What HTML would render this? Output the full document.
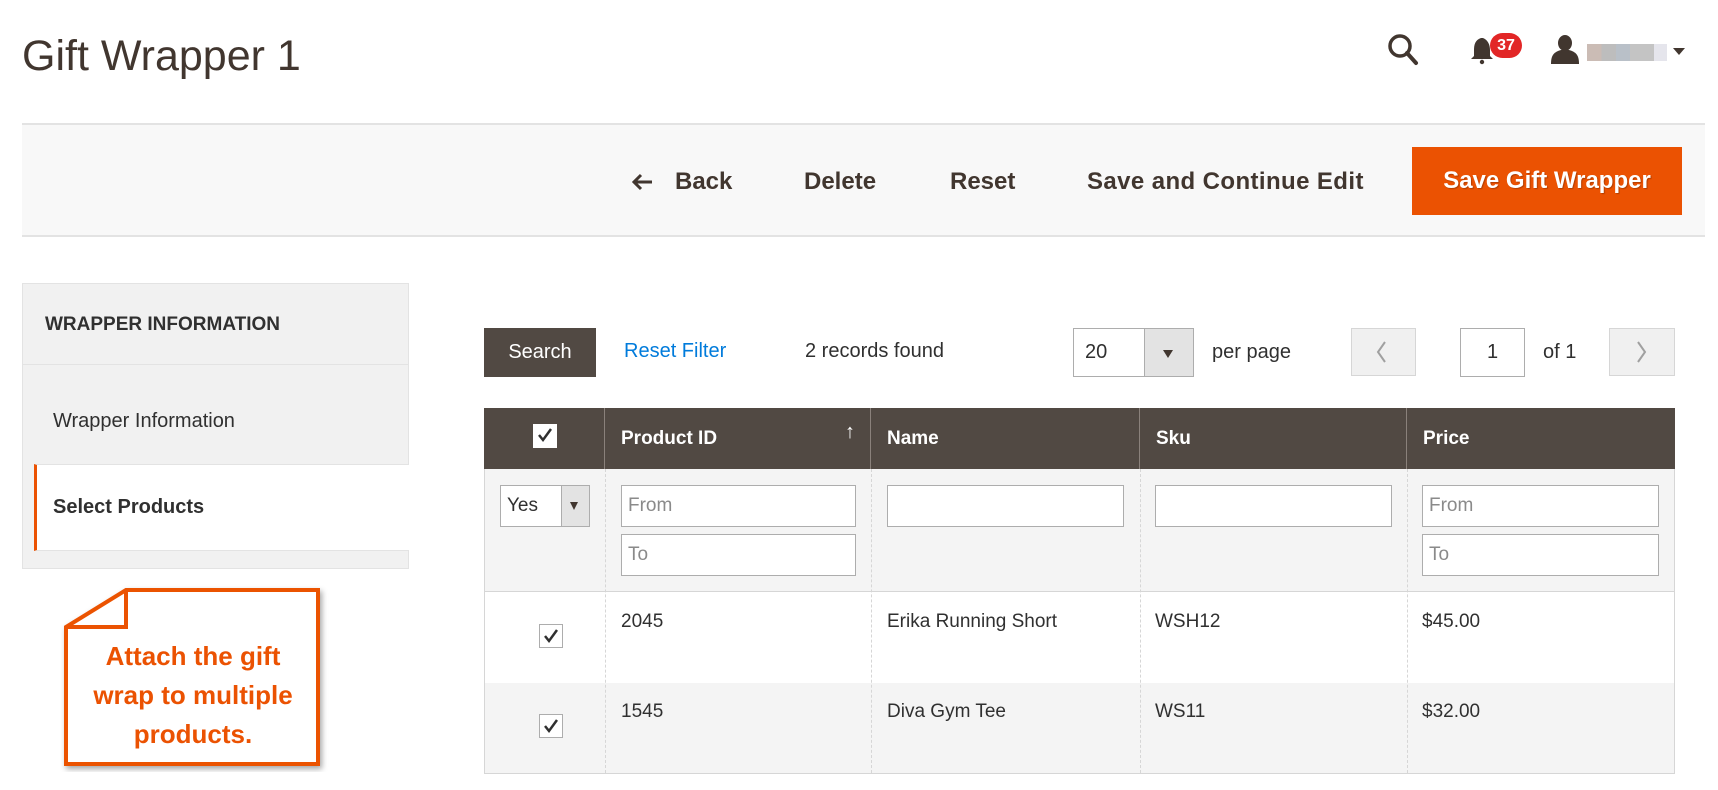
<!DOCTYPE html>
<html><head><meta charset="utf-8"><style>
*{box-sizing:border-box;margin:0;padding:0}
body{width:1718px;height:790px;background:#fff;font-family:"Liberation Sans",sans-serif;color:#303030;position:relative;overflow:hidden}
.a{position:absolute}
.t{white-space:nowrap}
.inp{position:absolute;background:#fff;border:1px solid #adadad;height:42px;font-size:19px;color:#8a8a8a;padding:9px 6px}
.hd{position:absolute;top:408px;height:61px;color:#fff;font-weight:bold;font-size:19px;line-height:61px;padding-left:16px;border-right:1px solid #8a817b}
.cb{position:absolute;width:24px;height:24px;border:1px solid #adadad;background:#fff}
.vl{position:absolute;top:469px;height:304px;border-left:1px dashed #d6d6d6}
.cell{position:absolute;font-size:19px;color:#303030}
</style></head><body>
<div class="a t" style="left:22px;top:32px;font-size:43px;color:#41362f">Gift Wrapper 1</div>
<svg class="a" style="left:1386px;top:33px" width="36" height="34" viewBox="0 0 36 34"><circle cx="14" cy="13" r="10" fill="none" stroke="#41362f" stroke-width="3.5"/><path d="M21 20 L30 30" stroke="#41362f" stroke-width="4" stroke-linecap="round"/></svg>
<svg class="a" style="left:1468px;top:36px" width="30" height="30" viewBox="0 0 30 30"><path d="M13 2 C7 4 6 9 6 14 L6 20 L3 23 L25 23 L22 20 L22 14 C22 9 20 4 15 2 Z" fill="#41362f"/><circle cx="14" cy="26" r="2.2" fill="#41362f"/></svg>
<div class="a t" style="left:1490px;top:33px;width:32px;height:25px;border-radius:13px;background:#e22626;color:#fff;font-weight:bold;font-size:16px;line-height:25px;text-align:center">37</div>
<svg class="a" style="left:1548px;top:34px" width="34" height="30" viewBox="0 0 34 30"><ellipse cx="17" cy="9" rx="7" ry="8" fill="#41362f"/><path d="M13 16 L21 16 C28 18 31 21 31 30 L3 30 C3 21 6 18 13 16 Z" fill="#41362f"/></svg>
<div class="a" style="left:1587px;top:44px;width:80px;height:17px;background:linear-gradient(90deg,#cbbcb5 0,#cbbcb5 18%,#bdbdbd 18%,#bdbdbd 36%,#b9c0c8 36%,#b9c0c8 54%,#c4c4c4 54%,#c4c4c4 84%,#e5e5ec 84%)"></div>
<div class="a" style="left:1673px;top:48px;width:0;height:0;border-left:6px solid transparent;border-right:6px solid transparent;border-top:7px solid #41362f"></div>
<div class="a" style="left:22px;top:123px;width:1683px;height:114px;background:#f8f8f8;border-top:2px solid #e3e3e3;border-bottom:2px solid #e3e3e3"></div>
<svg class="a" style="left:630px;top:172px" width="24" height="20" viewBox="0 0 24 20"><path d="M22 10 H4 M11 3 L4 10 L11 17" fill="none" stroke="#41362f" stroke-width="3"/></svg>
<div class="a t" style="left:675px;top:168px;font-size:24px;font-weight:bold;color:#41362f">Back</div>
<div class="a t" style="left:804px;top:168px;font-size:24px;font-weight:bold;color:#41362f">Delete</div>
<div class="a t" style="left:950px;top:168px;font-size:24px;font-weight:bold;color:#41362f">Reset</div>
<div class="a t" style="left:1087px;top:168px;font-size:24px;font-weight:bold;color:#41362f;letter-spacing:0.4px">Save and Continue Edit</div>
<div class="a t" style="left:1412px;top:147px;width:270px;height:68px;background:#eb5202;color:#fff;font-size:24px;font-weight:bold;line-height:68px;text-align:center;text-shadow:1px 1px 1px rgba(0,0,0,.25)">Save Gift Wrapper</div>
<div class="a" style="left:22px;top:283px;width:387px;height:286px;background:#f1f1f1;border:1px solid #e3e3e3"></div>
<div class="a t" style="left:45px;top:314px;font-size:19px;font-weight:bold;color:#303030">WRAPPER INFORMATION</div>
<div class="a" style="left:22px;top:364px;width:387px;border-top:1px solid #e3e3e3"></div>
<div class="a t" style="left:53px;top:410px;font-size:20px;color:#303030">Wrapper Information</div>
<div class="a" style="left:34px;top:464px;width:375px;height:87px;background:#fff;border-left:3px solid #eb5202;border-top:1px solid #e3e3e3;border-bottom:1px solid #e3e3e3"></div>
<div class="a t" style="left:53px;top:496px;font-size:20px;font-weight:bold;color:#303030">Select Products</div>
<svg class="a" style="left:60px;top:582px" width="270" height="190" viewBox="0 0 270 190"><defs><filter id="s"><feDropShadow dx="2" dy="3" stdDeviation="3" flood-opacity=".35"/></filter></defs><path d="M66 8 L258 8 L258 182 L6 182 L6 45 Z" fill="#fff" stroke="#eb5202" stroke-width="4" filter="url(#s)"/><path d="M6 45 L66 45 L66 8" fill="none" stroke="#eb5202" stroke-width="4"/></svg>
<div class="a t" style="left:70px;top:637px;width:246px;text-align:center;color:#eb5202;font-weight:bold;font-size:26px;line-height:39px">Attach the gift<br>wrap to multiple<br>products.</div>
<div class="a t" style="left:484px;top:328px;width:112px;height:49px;background:#514943;color:#fff;font-size:20px;line-height:49px;text-align:center">Search</div>
<div class="a t" style="left:624px;top:340px;font-size:20px;color:#007bdb">Reset Filter</div>
<div class="a t" style="left:805px;top:340px;font-size:20px;color:#303030">2 records found</div>
<div class="a" style="left:1073px;top:328px;width:121px;height:49px;border:1px solid #adadad;background:#fff"></div>
<div class="a" style="left:1144px;top:329px;width:49px;height:47px;background:#e3e3e3;border-left:1px solid #adadad"></div>
<div class="a" style="left:1163px;top:350px;border-left:5px solid transparent;border-right:5px solid transparent;border-top:8px solid #41362f"></div>
<div class="a t" style="left:1085px;top:341px;font-size:20px">20</div>
<div class="a t" style="left:1212px;top:341px;font-size:20px">per page</div>
<div class="a" style="left:1351px;top:328px;width:65px;height:48px;background:#f0f0f0;border:1px solid #d6d6d6"></div>
<svg class="a" style="left:1375px;top:340px" width="14" height="24"><path d="M10 2 L3 12 L10 22" fill="none" stroke="#a0a0a0" stroke-width="2"/></svg>
<div class="a" style="left:1460px;top:328px;width:65px;height:49px;background:#fff;border:1px solid #adadad;text-align:center;font-size:20px;line-height:47px">1</div>
<div class="a t" style="left:1543px;top:341px;font-size:20px">of 1</div>
<div class="a" style="left:1609px;top:328px;width:66px;height:48px;background:#f0f0f0;border:1px solid #d6d6d6"></div>
<svg class="a" style="left:1635px;top:340px" width="14" height="24"><path d="M3 2 L10 12 L3 22" fill="none" stroke="#a0a0a0" stroke-width="2"/></svg>
<div class="a" style="left:484px;top:408px;width:1191px;height:366px;border:1px solid #d6d6d6;border-top:none;background:#fff"></div>
<div class="a" style="left:484px;top:408px;width:1191px;height:61px;background:#514943"></div>
<div class="hd" style="left:484px;width:121px"></div>
<div class="a" style="left:533px;top:424px;width:24px;height:24px;background:#fff"></div>
<svg class="a" style="left:535px;top:425px" width="20" height="20"><path d="M4 10 L8 15 L16 4" fill="none" stroke="#303030" stroke-width="2.5"/></svg>
<div class="hd" style="left:605px;width:266px">Product ID</div>
<div class="a t" style="left:845px;top:421px;color:#fff;font-size:20px">↑</div>
<div class="hd" style="left:871px;width:269px">Name</div>
<div class="hd" style="left:1140px;width:267px">Sku</div>
<div class="hd" style="left:1407px;width:268px;border-right:none">Price</div>
<div class="a" style="left:485px;top:469px;width:1189px;height:123px;background:#f4f4f4;border-bottom:1px solid #d6d6d6"></div>
<div class="a" style="left:485px;top:683px;width:1189px;height:90px;background:#f4f4f4"></div>
<div class="vl" style="left:605px"></div><div class="vl" style="left:871px"></div><div class="vl" style="left:1140px"></div><div class="vl" style="left:1407px"></div>
<div class="inp" style="left:500px;top:485px;width:90px;color:#303030">Yes</div>
<div class="a" style="left:561px;top:486px;width:28px;height:40px;background:#e3e3e3;border-left:1px solid #adadad"></div>
<div class="a" style="left:570px;top:502px;border-left:4px solid transparent;border-right:4px solid transparent;border-top:8px solid #41362f"></div>
<div class="inp" style="left:621px;top:485px;width:235px">From</div>
<div class="inp" style="left:621px;top:534px;width:235px">To</div>
<div class="inp" style="left:887px;top:485px;width:237px"></div>
<div class="inp" style="left:1155px;top:485px;width:237px"></div>
<div class="inp" style="left:1422px;top:485px;width:237px">From</div>
<div class="inp" style="left:1422px;top:534px;width:237px">To</div>
<div class="cb" style="left:539px;top:624px"></div>
<svg class="a" style="left:541px;top:626px" width="20" height="20"><path d="M4 10 L8 15 L16 4" fill="none" stroke="#303030" stroke-width="2.5"/></svg>
<div class="cb" style="left:539px;top:714px"></div>
<svg class="a" style="left:541px;top:716px" width="20" height="20"><path d="M4 10 L8 15 L16 4" fill="none" stroke="#303030" stroke-width="2.5"/></svg>
<div class="cell" style="left:621px;top:611px">2045</div>
<div class="cell" style="left:887px;top:611px">Erika Running Short</div>
<div class="cell" style="left:1155px;top:611px">WSH12</div>
<div class="cell" style="left:1422px;top:611px">$45.00</div>
<div class="cell" style="left:621px;top:701px">1545</div>
<div class="cell" style="left:887px;top:701px">Diva Gym Tee</div>
<div class="cell" style="left:1155px;top:701px">WS11</div>
<div class="cell" style="left:1422px;top:701px">$32.00</div>
</body></html>
